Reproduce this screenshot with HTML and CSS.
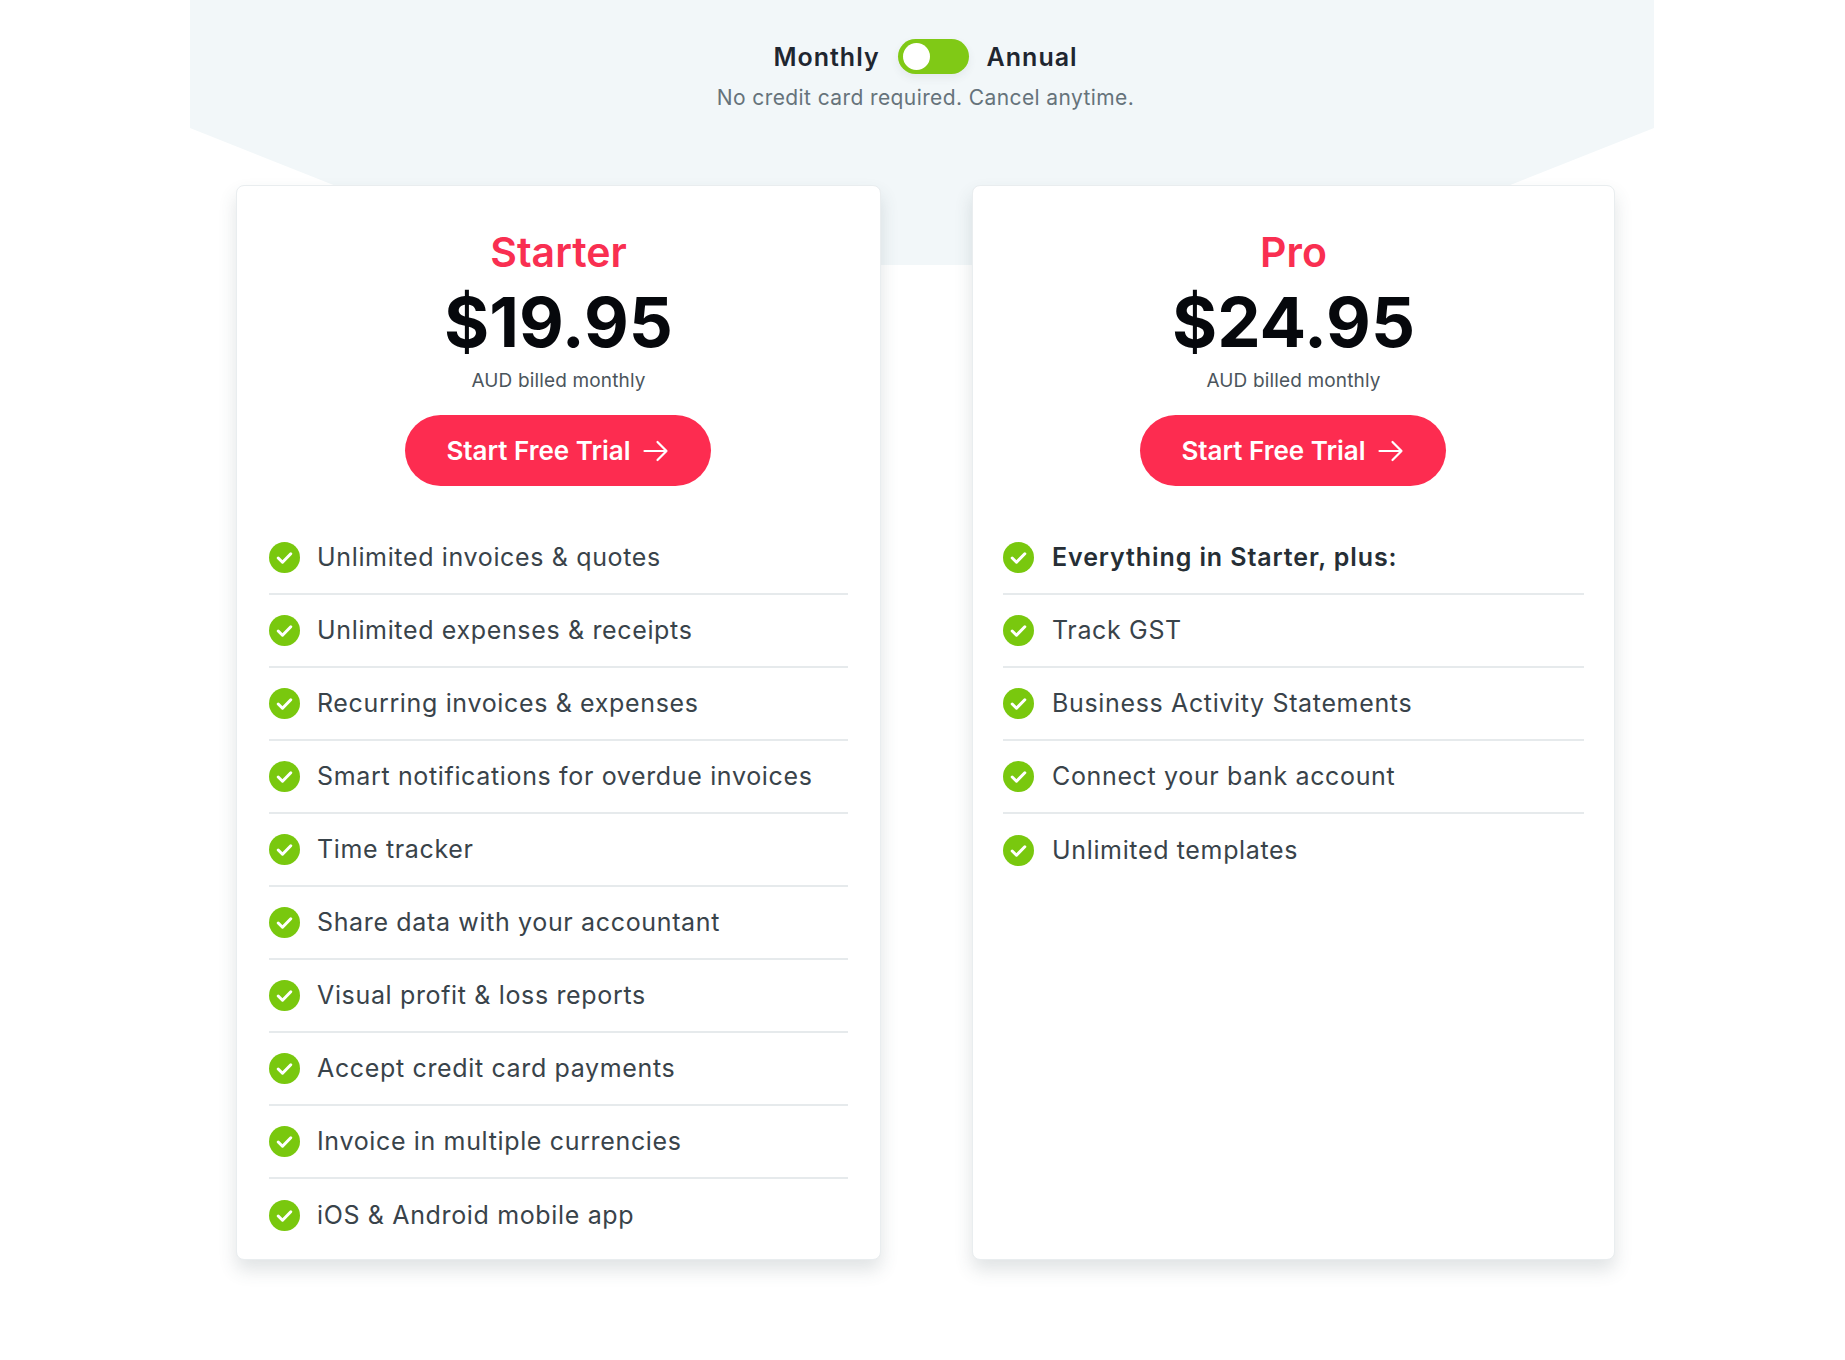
FILE: index.html
```html
<!DOCTYPE html>
<html lang="en">
<head>
    <meta charset="UTF-8">
    <title>Pricing</title>
    <meta name="viewport" content="width=device-width, initial-scale=1">
    <link rel="stylesheet" href="styles.css">
</head>
<body>
<svg class="icon-defs" width="0" height="0" aria-hidden="true">
    <symbol id="check" viewBox="0 0 31 31">
        <circle cx="15.5" cy="15.5" r="15.5" fill="#79c80e"/>
        <path d="M9.2 16l4.3 4.2 8.3-8.4" fill="none" stroke="#fff" stroke-width="3" stroke-linecap="round" stroke-linejoin="round"/>
    </symbol>
    <symbol id="arrow" viewBox="0 0 26 24">
        <path d="M1.5 12h22M14.5 3l9 9-9 9" fill="none" stroke="#fff" stroke-width="2.2" stroke-linecap="round" stroke-linejoin="round"/>
    </symbol>
</svg>

<div class="pricing">
    <div class="pricing--band"></div>

    <div class="billing">
        <div class="billing--switch">
            <span>Monthly</span>
            <span class="toggle"><span class="toggle--knob"></span></span>
            <span>Annual</span>
        </div>
        <p class="billing--note">No credit card required. Cancel anytime.</p>
    </div>

    <div class="plans">
        <div class="plan">
            <h2 class="plan--name">Starter</h2>
            <div class="plan--price">$19.95</div>
            <p class="plan--billed">AUD billed monthly</p>
            <a class="plan--button" href="#">Start Free Trial <svg class="plan--arrow"><use href="#arrow"/></svg></a>
            <ul class="features">
                <li><svg class="tick"><use href="#check"/></svg>Unlimited invoices &amp; quotes</li>
                <li><svg class="tick"><use href="#check"/></svg>Unlimited expenses &amp; receipts</li>
                <li><svg class="tick"><use href="#check"/></svg>Recurring invoices &amp; expenses</li>
                <li><svg class="tick"><use href="#check"/></svg>Smart notifications for overdue invoices</li>
                <li><svg class="tick"><use href="#check"/></svg>Time tracker</li>
                <li><svg class="tick"><use href="#check"/></svg>Share data with your accountant</li>
                <li><svg class="tick"><use href="#check"/></svg>Visual profit &amp; loss reports</li>
                <li><svg class="tick"><use href="#check"/></svg>Accept credit card payments</li>
                <li><svg class="tick"><use href="#check"/></svg>Invoice in multiple currencies</li>
                <li><svg class="tick"><use href="#check"/></svg>iOS &amp; Android mobile app</li>
            </ul>
        </div>

        <div class="plan plan-pro">
            <h2 class="plan--name">Pro</h2>
            <div class="plan--price">$24.95</div>
            <p class="plan--billed">AUD billed monthly</p>
            <a class="plan--button" href="#">Start Free Trial <svg class="plan--arrow"><use href="#arrow"/></svg></a>
            <ul class="features">
                <li class="strong"><svg class="tick"><use href="#check"/></svg>Everything in Starter, plus:</li>
                <li><svg class="tick"><use href="#check"/></svg>Track GST</li>
                <li><svg class="tick"><use href="#check"/></svg>Business Activity Statements</li>
                <li><svg class="tick"><use href="#check"/></svg>Connect your bank account</li>
                <li><svg class="tick"><use href="#check"/></svg>Unlimited templates</li>
            </ul>
        </div>
    </div>
</div>
</body>
</html>
```

FILE: styles.css
```css
*, *:before, *:after {
    box-sizing: border-box;
    padding: 0;
    margin: 0;
}

body {
    background: #fff;
    font-family: "Inter", "Liberation Sans", sans-serif;
    color: #39434a;
}

.icon-defs {
    position: absolute;
}

.pricing {
    position: relative;
    height: 1360px;
    overflow: hidden;
}

/* pale backdrop with the cut corners */
.pricing--band {
    position: absolute;
    top: 0;
    left: 190px;
    width: 1464px;
    height: 265px;
    background: #f2f7f9;
    clip-path: polygon(0 0, 100% 0, 100% 128px, 1119px 100%, 345px 100%, 0 128px);
}

.billing {
    position: relative;
    display: flex;
    flex-direction: column;
    align-items: center;
    padding: 39px 0 0 6px;
}

.billing--switch {
    display: flex;
    align-items: center;
    gap: 18px;
    height: 35px;
    font-size: 25px;
    font-weight: 600;
    letter-spacing: 1px;
    color: #1f2630;
}

.toggle {
    display: flex;
    align-items: center;
    width: 71px;
    height: 35px;
    padding: 0 5px;
    border-radius: 18px;
    background: #80c916;
    box-shadow: 0 4px 8px rgba(60, 80, 90, 0.08);
}

.toggle--knob {
    width: 27px;
    height: 27px;
    border-radius: 50%;
    background: #fff;
}

.billing--note {
    margin-top: 9px;
    font-size: 21px;
    line-height: 30px;
    letter-spacing: 0.4px;
    color: #66737b;
}

.plans {
    position: relative;
    display: grid;
    grid-template-columns: 645px 643px;
    gap: 91px;
    margin: 0 0 0 236px;
    padding-top: 72px;
}

.plan {
    display: flex;
    flex-direction: column;
    align-items: center;
    height: 1075px;
    padding: 40px 32px 7px;
    background: #fff;
    border: 1px solid #e9edef;
    border-radius: 8px;
    box-shadow: 0 10px 18px rgba(60, 80, 90, 0.16);
}

.plan--name {
    font-size: 41px;
    line-height: 52px;
    font-weight: 600;
    color: #f92f51;
}

.plan--price {
    margin-top: 2px;
    font-size: 69px;
    line-height: 84px;
    font-weight: 700;
    color: #06080c;
}

.plan--billed {
    margin-top: 4px;
    font-size: 19px;
    line-height: 26px;
    letter-spacing: 0.15px;
    color: #4b555c;
}

.plan--button {
    display: flex;
    align-items: center;
    justify-content: center;
    gap: 12px;
    width: 306px;
    height: 71px;
    margin: 21px 0 0 -2px;
    border-radius: 36px;
    background: #fd2c50;
    color: #fff;
    font-size: 26px;
    font-weight: 600;
    text-decoration: none;
}

.plan--arrow {
    width: 26px;
    height: 24px;
}

.features {
    align-self: stretch;
    list-style: none;
    margin-top: 36px;
}

.plan-pro .features {
    margin-left: -2px;
    margin-right: -2px;
}

.features li {
    display: flex;
    align-items: center;
    gap: 17px;
    height: 73px;
    padding-bottom: 1px;
    border-bottom: 2px solid #e6eaec;
    font-size: 25px;
    letter-spacing: 0.65px;
}

.features li:last-child {
    border-bottom: 0;
}

.plan-pro .tick {
    margin-right: 1px;
}

.features .strong {
    font-weight: 600;
    letter-spacing: 0.9px;
    color: #262e35;
}

.tick {
    flex: 0 0 31px;
    width: 31px;
    height: 31px;
}
```
